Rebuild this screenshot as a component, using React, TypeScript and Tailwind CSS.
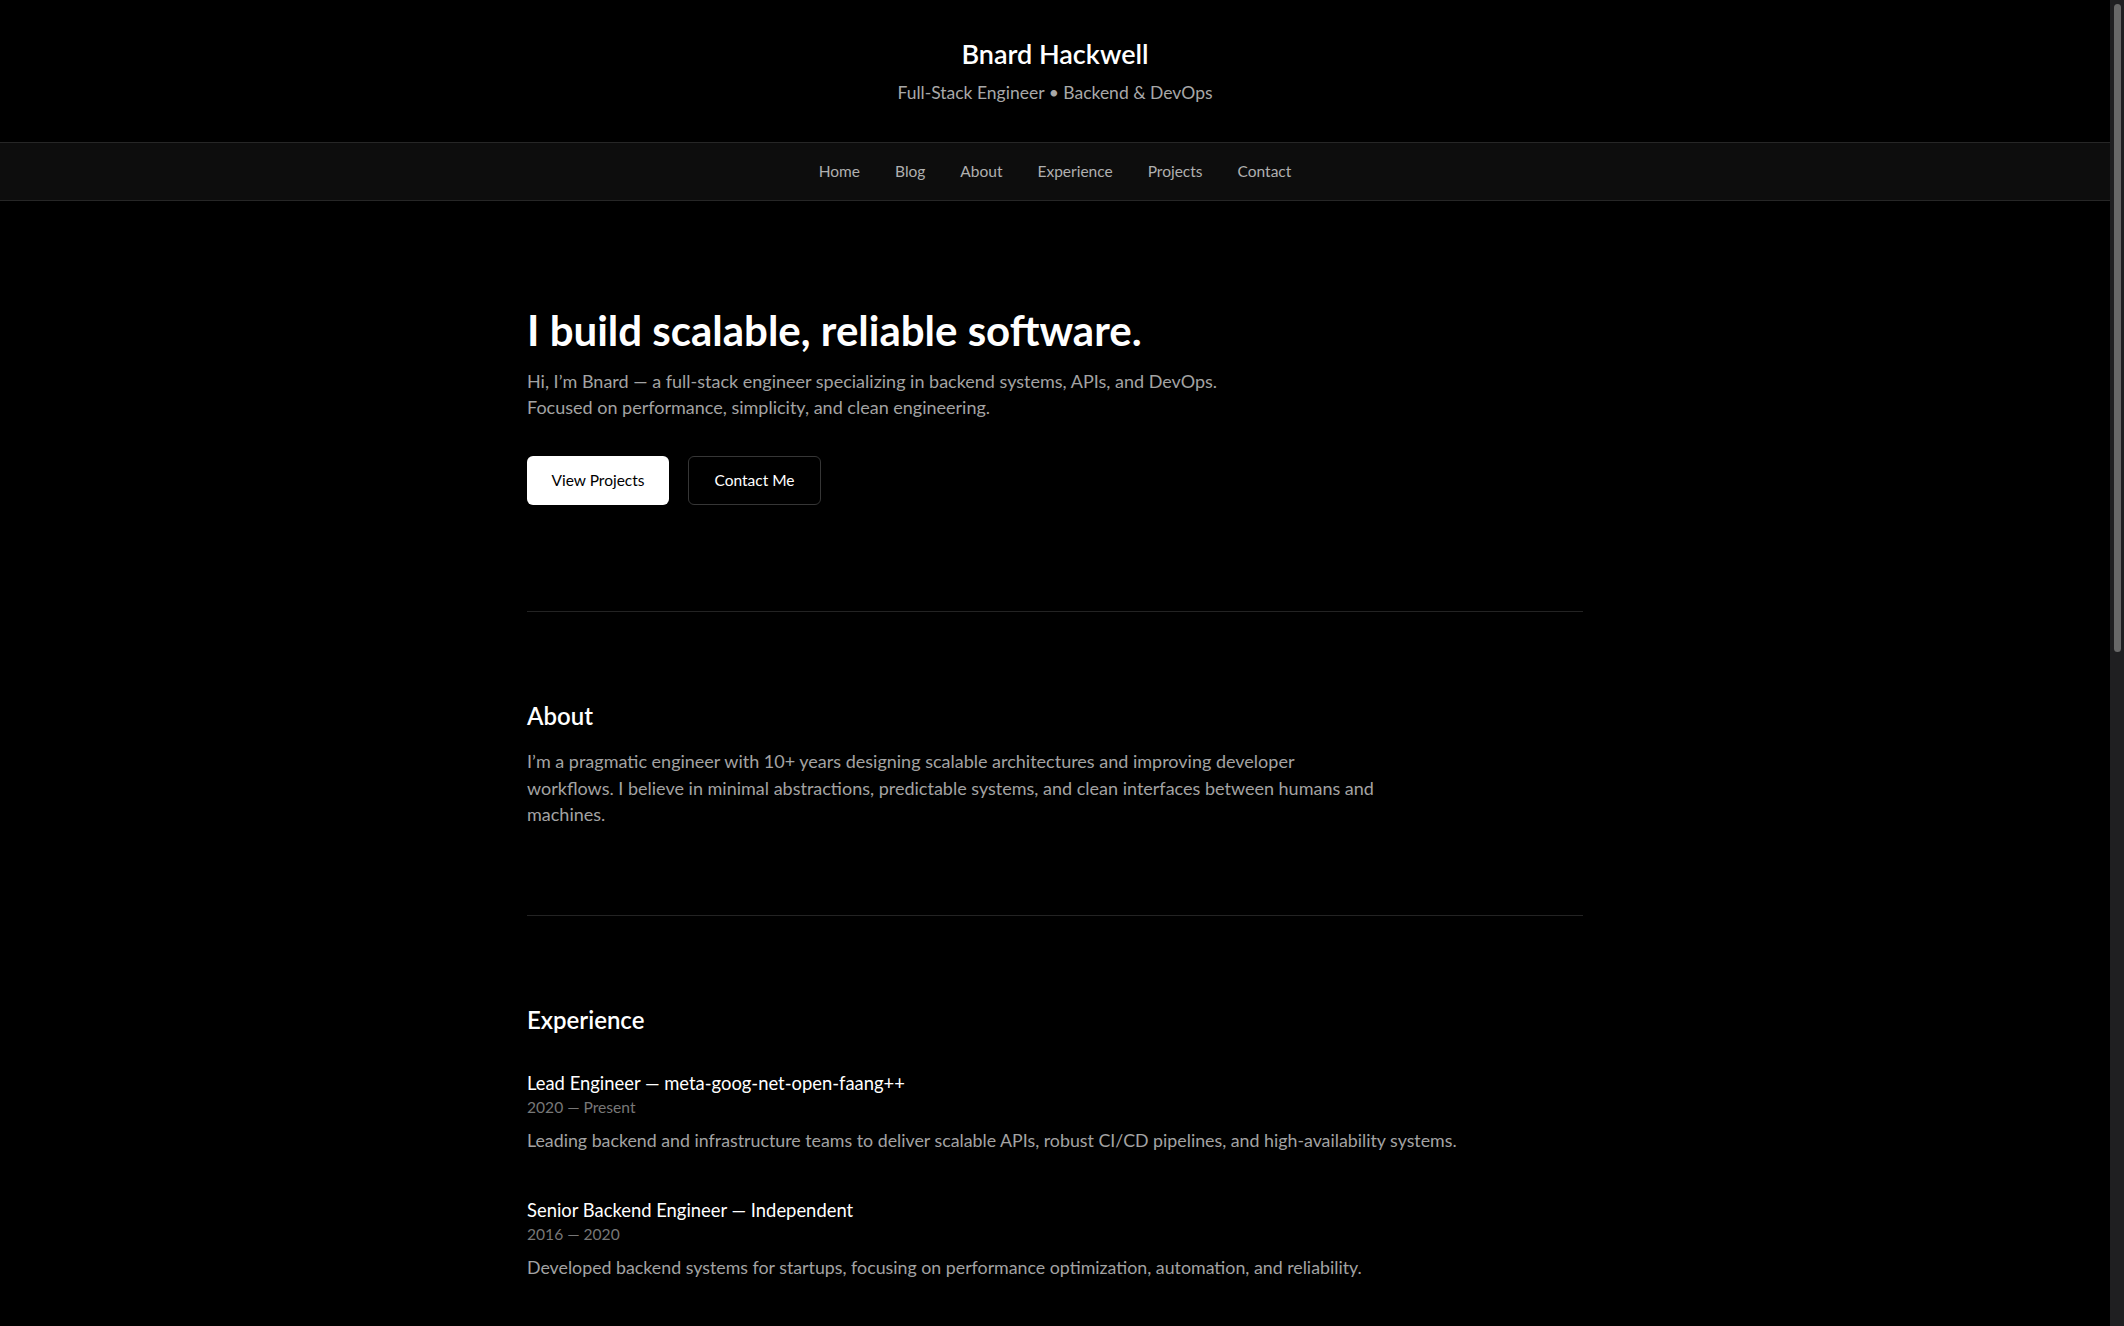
const navLinks = ["Home", "Blog", "About", "Experience", "Projects", "Contact"];

const jobs = [
  {
    title: "Lead Engineer — meta-goog-net-open-faang++",
    period: "2020 — Present",
    text: "Leading backend and infrastructure teams to deliver scalable APIs, robust CI/CD pipelines, and high-availability systems.",
  },
  {
    title: "Senior Backend Engineer — Independent",
    period: "2016 — 2020",
    text: "Developed backend systems for startups, focusing on performance optimization, automation, and reliability.",
  },
  {
    title: "Software Engineer — Freelance",
    period: "2013 — 2016",
    text: "Built web applications, internal tools and data pipelines for small businesses and agencies.",
  },
];

const projects = [
  { name: "Distributed Job Queue", text: "A fault-tolerant task queue with retries, scheduling and metrics." },
  { name: "Observability Stack", text: "Logging, tracing and alerting for containerized services." },
  { name: "API Gateway", text: "Lightweight gateway with auth, rate limiting and caching." },
  { name: "Infra Templates", text: "Reusable Terraform and CI/CD templates for fast delivery." },
];

export default function App() {
  return (
    <div className="flex h-screen bg-black text-white font-['Lato','Noto_Sans',sans-serif]">
      <div className="flex-1 min-w-0 overflow-y-auto [scrollbar-width:none]">
        {/* header */}
        <header className="border-b border-[#262626] pt-[38px] pb-[36px] text-center">
          <h1 className="text-[27px] leading-[31px] font-semibold text-white">Bnard Hackwell</h1>
          <p className="mt-[11px] text-[17.5px] leading-[26px] text-[#a8a8a8]">Full-Stack Engineer • Backend &amp; DevOps</p>
        </header>

        <nav className="bg-[#0d0d0d] border-b border-[#262626] h-[58px] flex items-center justify-center gap-[35px]">
          {navLinks.map((l) => (
            <a key={l} href="#" className="text-[15.5px] text-[#b0b0b0]">
              {l}
            </a>
          ))}
        </nav>

        <main className="w-[1056px] mx-auto">
          {/* hero */}
          <section className="pt-[104px] pb-[106px] border-b border-[#232323]">
            <h2 className="text-[42px] leading-[50px] font-bold">I build scalable, reliable software.</h2>
            <p className="mt-[13px] text-[18px] leading-[26px] text-[#a3a3a3]">
              Hi, I’m Bnard — a full-stack engineer specializing in backend systems, APIs, and DevOps.
              <br />
              Focused on performance, simplicity, and clean engineering.
            </p>
            <div className="mt-[36px] flex gap-[19px]">
              <a href="#" className="h-[49px] w-[142px] rounded-[6px] bg-white text-black text-[15.5px] flex items-center justify-center">
                View Projects
              </a>
              <a href="#" className="h-[49px] w-[133px] rounded-[6px] border border-[#363636] text-white text-[15.5px] flex items-center justify-center">
                Contact Me
              </a>
            </div>
          </section>

          {/* about */}
          <section className="pt-[88px] pb-[87px] border-b border-[#232323]">
            <h2 className="text-[24px] leading-[31px] font-semibold">About</h2>
            <p className="mt-[17px] max-w-[850px] text-[18px] leading-[26.5px] text-[#a3a3a3]">
              I’m a pragmatic engineer with 10+ years designing scalable architectures and improving developer workflows. I believe in minimal abstractions, predictable systems, and clean interfaces between humans and machines.
            </p>
          </section>

          {/* experience */}
          <section className="pt-[88px] pb-[88px] border-b border-[#232323]">
            <h2 className="text-[24px] leading-[31px] font-semibold">Experience</h2>
            <div className="mt-[36px] flex flex-col gap-[45px]">
              {jobs.map((j) => (
                <div key={j.title}>
                  <h3 className="text-[18.4px] leading-[24px] text-white">{j.title}</h3>
                  <div className="mt-[2px] text-[15.6px] leading-[20px] text-[#777]">{j.period}</div>
                  <p className="mt-[10px] text-[17.8px] leading-[26px] text-[#a3a3a3]">{j.text}</p>
                </div>
              ))}
            </div>
          </section>

          {/* projects */}
          <section className="pt-[88px] pb-[88px] border-b border-[#232323]">
            <h2 className="text-[24px] leading-[31px] font-semibold">Projects</h2>
            <div className="mt-[36px] grid grid-cols-2 gap-6">
              {projects.map((p) => (
                <div key={p.name} className="border border-[#232323] rounded-[8px] bg-[#0a0a0a] p-7 h-[170px]">
                  <h3 className="text-[18.4px] text-white">{p.name}</h3>
                  <p className="mt-3 text-[17px] leading-[26px] text-[#a3a3a3]">{p.text}</p>
                </div>
              ))}
            </div>
          </section>

          {/* contact */}
          <section className="pt-[88px] pb-[100px]">
            <h2 className="text-[24px] leading-[31px] font-semibold">Contact</h2>
            <p className="mt-[17px] text-[18px] leading-[26.5px] text-[#a3a3a3]">
              Open to consulting, contract work and interesting problems. Reach out at hello@bnard.dev
            </p>
            <div className="mt-[36px] flex gap-[19px]">
              <a href="#" className="h-[49px] w-[133px] rounded-[6px] border border-[#363636] text-white text-[15.5px] flex items-center justify-center">
                Email Me
              </a>
            </div>
          </section>
        </main>

        <footer className="border-t border-[#232323] py-[40px] text-center text-[15px] text-[#777]">© 2025 Bnard Hackwell</footer>
      </div>

      {/* scrollbar */}
      <aside className="w-[14px] shrink-0 bg-[#1f1f21] pt-[4px] pl-[4px] pr-[3px]">
        <div className="h-[648px] rounded-full bg-[#686868]" />
      </aside>
    </div>
  );
}
